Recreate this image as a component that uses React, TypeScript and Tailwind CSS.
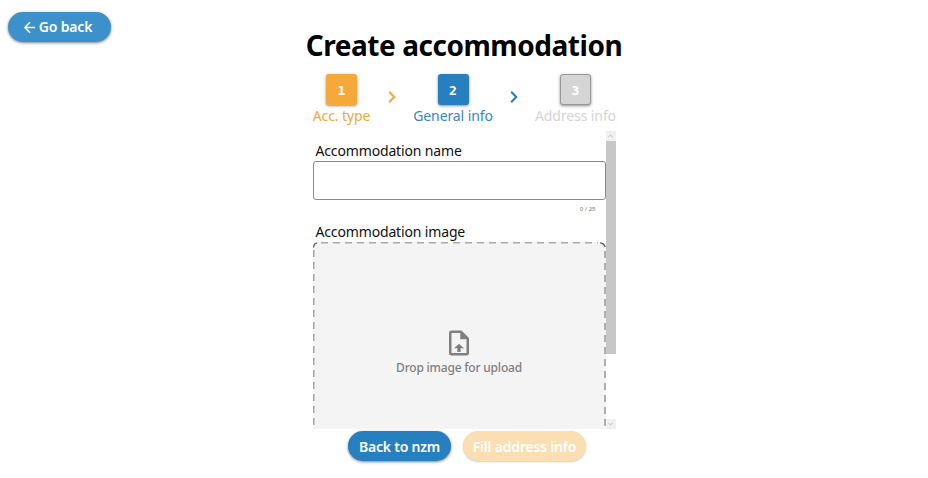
import React from "react";
import { MdArrowBack } from "react-icons/md";

const steps = [
  { n: "1", label: "Acc. type", box: "bg-[#f6a93b]", text: "text-[#f2a843]", width: "w-[58px]" },
  { n: "2", label: "General info", box: "bg-[#2680bf]", text: "text-[#3a86bf]", width: "w-[78px]" },
  { n: "3", label: "Address info", box: "bg-[#d5d5d5] border border-[#999]", text: "text-[#d4d4d4]", width: "w-[80px]" },
];

function Step({ index }: { index: number }) {
  const s = steps[index];
  return (
    <div className={`flex flex-col items-center ${s.width}`}>
      <div className={`flex h-[31px] w-[31px] items-center justify-center rounded-[3px] pt-[2px] font-['DejaVu_Sans_Mono',monospace] text-[13px] font-bold leading-none text-white shadow-[0_1px_3px_rgba(0,0,0,0.45)] ${s.box}`}>
        {s.n}
      </div>
      <span className={`mt-[1px] whitespace-nowrap text-[14px] leading-[20px] tracking-[-0.1px] ${s.text}`}>{s.label}</span>
    </div>
  );
}

function Chevron({ color }: { color: string }) {
  return (
    <svg className={`mt-[16px] ${color}`} width="10" height="14" viewBox="0 0 10 14">
      <path d="M2.2 1.8 7.2 7l-5 5.2" fill="none" stroke="currentColor" strokeWidth="2.1" />
    </svg>
  );
}

function ScrollBar() {
  return (
    <div className="flex h-[298px] w-[10px] flex-col bg-white">
      <div className="flex h-[10px] items-center justify-center bg-[#f0f0f0]">
        <svg width="5" height="4" viewBox="0 0 5 4"><path d="M.5 3 2.5 1l2 2" fill="none" stroke="#bbb" /></svg>
      </div>
      <div className="h-[213px] bg-[#c7c7c7]" />
      <div className="mt-auto flex h-[10px] items-center justify-center bg-[#f0f0f0]">
        <svg width="5" height="4" viewBox="0 0 5 4"><path d="M.5 1l2 2 2-2" fill="none" stroke="#bbb" /></svg>
      </div>
    </div>
  );
}

function UploadFileIcon() {
  return (
    <svg width="30" height="30" viewBox="0 0 24 24" fill="#808080">
      <path fillRule="evenodd" d="M14 2H6a2 2 0 0 0-2 2v16a2 2 0 0 0 2 2h12a2 2 0 0 0 2-2V8l-6-6zm4 18H6V4h7v5h5v11z" />
      <path d="M12 12.5 8 16.2h2.7V19.2h2.6v-3H16z" />
    </svg>
  );
}

export default function App() {
  return (
    <div className="relative h-[478px] w-[928px] overflow-hidden bg-white font-['Noto_Sans',sans-serif]">
      <button className="absolute left-[8px] top-[12px] flex h-[30px] w-[103px] items-center justify-center gap-[1px] rounded-full bg-[#3c91cb] pr-[6px] text-[14px] font-semibold text-white shadow-[0_1px_3px_rgba(0,0,0,0.5)]">
        <MdArrowBack size={17} />
        <span className="whitespace-nowrap pb-[1px] tracking-[-0.15px]">Go back</span>
      </button>

      <main className="flex flex-col items-center pt-[25px]">
        <h1 className="whitespace-nowrap text-[28px] font-bold leading-[40px] tracking-[-0.45px] text-black">Create accommodation</h1>

        <div className="mt-[9px] flex h-[56px] w-[303px] items-start justify-between">
          <Step index={0} />
          <Chevron color="text-[#f2a843]" />
          <Step index={1} />
          <Chevron color="text-[#2680bf]" />
          <Step index={2} />
        </div>

        <div className="mt-[1px] flex h-[298px] w-[303px] overflow-hidden">
          <div className="flex w-[293px] flex-col">
            <label className="mt-[9px] h-[21px] shrink-0 whitespace-nowrap pl-[3px] text-[14px] leading-[21px] tracking-[-0.15px] text-[#111]">Accommodation name</label>
            <div className="h-[39px] w-[293px] shrink-0 rounded-[3px] border border-[#8a8a8a] bg-white" />
            <span className="mr-[10px] mt-[5px] h-[8px] shrink-0 self-end text-[6px] leading-[8px] text-[#777]">0 / 25</span>
            <label className="mt-[9px] h-[20px] shrink-0 whitespace-nowrap pl-[3px] text-[14px] leading-[20px] tracking-[-0.15px] text-[#111]">Accommodation image</label>
            <div className="relative flex h-[220px] shrink-0 flex-col items-center rounded-[5px] bg-[#f4f4f4] pt-[86px]">
              <svg className="absolute left-0 top-0" width="293" height="220" viewBox="0 0 293 220" fill="none">
                <path d="M8 .8H285" stroke="#aaa" strokeWidth="1.6" strokeDasharray="7 5" />
                <path d="M.8 8V220" stroke="#aaa" strokeWidth="1.6" strokeDasharray="7 5" />
                <path d="M292 9V220" stroke="#8c8c8c" strokeWidth="1.3" strokeDasharray="7 5" />
                <path d="M.6 5.5Q.6 1.5 4 .8M287 .8Q291 1.2 292.3 5" stroke="#555" strokeWidth="1.2" />
              </svg>
              <UploadFileIcon />
              <span className="mt-[1px] whitespace-nowrap text-[12px] font-medium leading-[18px] tracking-[-0.2px] text-[#808080]">Drop image for upload</span>
            </div>
          </div>
          <ScrollBar />
        </div>

        <div className="mt-[2px] flex gap-[12px] pl-[6px]">
          <button className="h-[30px] w-[103px] whitespace-nowrap rounded-full bg-[#2680bf] text-[14px] font-semibold tracking-[-0.2px] text-white shadow-[0_1px_3px_rgba(0,0,0,0.5)]">Back to nzm</button>
          <button className="h-[30px] w-[123px] whitespace-nowrap rounded-full bg-[#fbdeb2] text-[14px] font-semibold tracking-[-0.2px] text-white shadow-[0_1px_2px_rgba(0,0,0,0.2)]">Fill address info</button>
        </div>
      </main>
    </div>
  );
}
